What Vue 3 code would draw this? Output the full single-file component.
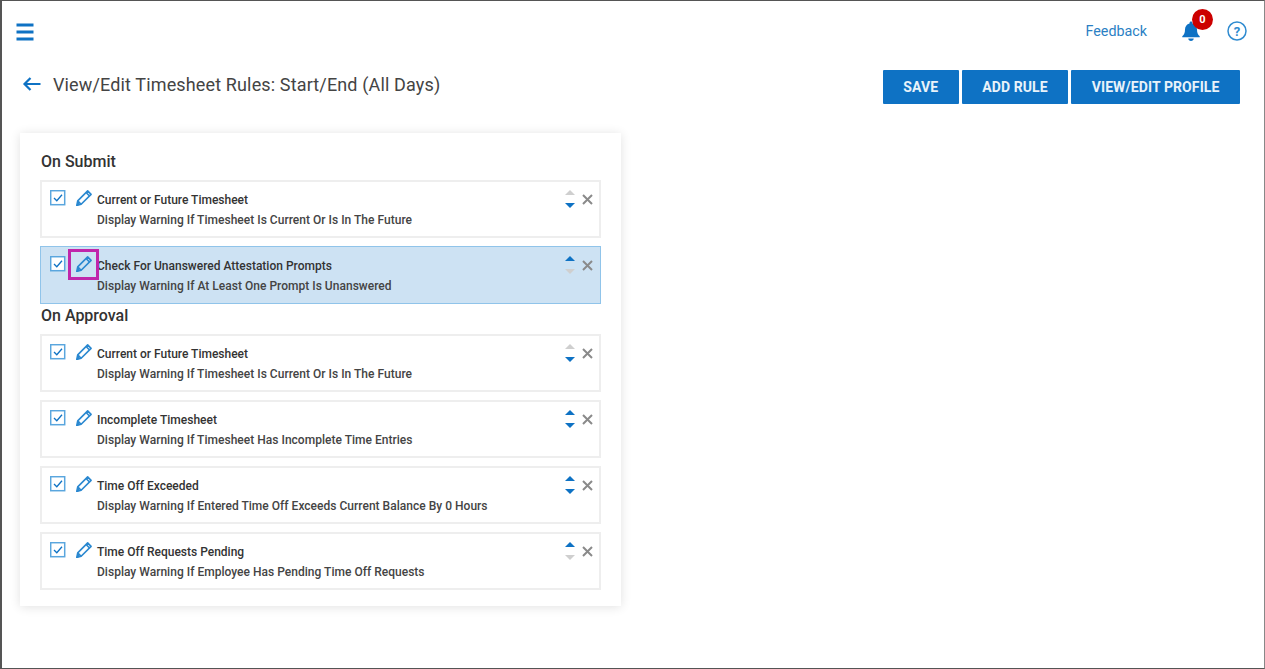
<script setup>
const groups = [
  { title: 'On Submit', rules: [
    { name: 'Current or Future Timesheet', desc: 'Display Warning If Timesheet Is Current Or Is In The Future', up: false, down: true },
    { name: 'Check For Unanswered Attestation Prompts', desc: 'Display Warning If At Least One Prompt Is Unanswered', up: true, down: false, active: true },
  ]},
  { title: 'On Approval', rules: [
    { name: 'Current or Future Timesheet', desc: 'Display Warning If Timesheet Is Current Or Is In The Future', up: false, down: true },
    { name: 'Incomplete Timesheet', desc: 'Display Warning If Timesheet Has Incomplete Time Entries', up: true, down: true },
    { name: 'Time Off Exceeded', desc: 'Display Warning If Entered Time Off Exceeds Current Balance By 0 Hours', up: true, down: true },
    { name: 'Time Off Requests Pending', desc: 'Display Warning If Employee Has Pending Time Off Requests', up: true, down: false },
  ]},
]
</script>

<template>
  <div class="frame">
    <header class="topbar">
      <svg class="menu" width="20" height="18" viewBox="0 0 20 18"><path d="M1.500 2h17M1.500 9h17M1.500 16h17" stroke="#0e72c4" stroke-width="3.200" fill="none"/></svg>
      <div class="top-right">
        <span class="feedback">Feedback</span>
        <span class="bell-wrap">
          <svg width="20" height="22" viewBox="0 0 22 24"><path d="M11 1.500c1 0 1.600.7 1.600 1.600v.6c3.200.8 5 3.400 5 6.600 0 3.800.9 5.600 3 7.400v1.100H1.400v-1.100c2.100-1.800 3-3.600 3-7.400 0-3.200 1.800-5.800 5-6.600v-.6c0-.9.600-1.600 1.600-1.600zM8 20.300h6c0 1.700-1.300 2.700-3 2.700s-3-1-3-2.700z" fill="#0e72c4"/></svg>
          <span class="badge">0</span>
        </span>
        <svg class="help" width="20" height="20" viewBox="0 0 20 20"><circle cx="10" cy="10" r="9" fill="none" stroke="#2f8bd0" stroke-width="1.500"/><text x="10" y="14.500" text-anchor="middle" class="help-mark">?</text></svg>
      </div>
    </header>

    <div class="titlebar">
      <svg class="back" width="20" height="16" viewBox="0 0 20 16"><path d="M18.500 8H2.500M8.500 2L2.500 8l6 6" fill="none" stroke="#0e72c4" stroke-width="2.200"/></svg>
      <h1>View/Edit Timesheet Rules: Start/End (All Days)</h1>
      <div class="actions">
        <button>SAVE</button>
        <button>ADD RULE</button>
        <button>VIEW/EDIT PROFILE</button>
      </div>
    </div>

    <section class="card">
      <div v-for="g in groups" :key="g.title" class="group">
        <h2>{{ g.title }}</h2>
        <div v-for="r in g.rules" :key="r.name" class="rule" :class="{ active: r.active }">
          <span class="check">
            <svg width="16" height="16" viewBox="0 0 16 16"><rect x="0.700" y="0.700" width="14" height="14" fill="#fff" stroke="#5aa6de" stroke-width="1.500"/><path d="M4 8l2.800 2.800L12 4.800" fill="none" stroke="#0e72c4" stroke-width="1.300"/></svg>
          </span>
          <span class="pencil" :class="{ marked: r.active }">
            <svg width="16" height="16" viewBox="1 1 14 14"><path d="M11.200 1.800l3 3L5.500 13.500l-3.800 1 .8-4zM2.500 10.500l3 3M9.800 3.200l3 3" fill="none" stroke="#2a88d0" stroke-width="1.400" stroke-linejoin="round"/><path d="M1.700 14.500l.8-3.200 2.600 2.400z" fill="#2a88d0"/></svg>
          </span>
          <div class="text">
            <div class="name">{{ r.name }}</div>
            <div class="desc">{{ r.desc }}</div>
          </div>
          <div class="arrows">
            <span class="tri up" :class="{ on: r.up }"></span>
            <span class="tri down" :class="{ on: r.down }"></span>
          </div>
          <svg class="close" width="11" height="11" viewBox="0 0 11 11"><path d="M1 1l9 9M10 1l-9 9" stroke="#8a8a8a" stroke-width="2" fill="none"/></svg>
        </div>
      </div>
    </section>
  </div>
</template>

<style>
html, body { margin: 0; background: #fff; }
</style>

<style scoped>
.frame {
  box-sizing: border-box;
  width: 1265px;
  height: 669px;
  border: 1px solid #555;
  border-left-width: 2px;
  border-right-color: #888;
  font-family: Roboto, "Liberation Sans", sans-serif;
  background: #fff;
  overflow: hidden;
}
.topbar {
  display: flex;
  align-items: center;
  justify-content: space-between;
  height: 60px;
  padding: 0 17px 0 13px;
}
.menu { margin-top: 1px; }
.top-right { display: flex; align-items: center; }
.feedback { font-size: 14.300px; color: #2b7fc4; margin-right: 34px; }
.bell-wrap { position: relative; display: flex; margin-right: 26px; }
.badge {
  position: absolute;
  left: 11px;
  top: -11px;
  width: 21px;
  height: 21px;
  border-radius: 50%;
  background: #cc0000;
  color: #fff;
  font-size: 11px;
  font-weight: 700;
  line-height: 21px;
  text-align: center;
}
.help-mark { font: 700 13px Roboto, sans-serif; fill: #2f8bd0; }
.titlebar {
  display: flex;
  align-items: center;
  height: 34px;
  margin-top: 9px;
  padding: 0 24px 0 20px;
}
.back { margin-top: -6px; }
h1 {
  margin: -6px 0 0 11px;
  font-size: 18px;
  font-weight: 400;
  color: #444;
  letter-spacing: 0.140px;
}
.actions { margin-left: auto; display: flex; gap: 3px; }
button {
  height: 34px;
  padding: 0 20.500px;
  border: none;
  border-radius: 1px;
  background: #0e72c4;
  color: #e8f2fa;
  font-family: inherit;
  font-size: 14px;
  font-weight: 700;
  letter-spacing: 0.100px;
}
.card {
  box-sizing: border-box;
  width: 601px;
  height: 473px;
  margin: 29px 0 0 18px;
  padding: 17px 20px;
  background: #fff;
  box-shadow: 0 1px 10px rgba(0, 0, 0, 0.120);
}
h2 {
  margin: 0;
  padding-left: 1px;
  height: 22px;
  line-height: 24px;
  font-size: 16px;
  font-weight: 500;
  color: #333;
}
.rule {
  box-sizing: border-box;
  position: relative;
  display: flex;
  height: 58px;
  margin-top: 8px;
  padding: 8px 0 0 8px;
  border: 2px solid #eeeeee;
}
.rule.active { background: #cde2f3; border: 1px solid #90c4ea; padding: 9px 0 0 9px; }
.check { width: 16px; height: 16px; }
.pencil {
  position: relative;
  width: 16px;
  height: 16px;
  margin-left: 10px;
}
.pencil.marked::after {
  content: "";
  position: absolute;
  left: -8px;
  top: -7px;
  width: 31px;
  height: 31px;
  box-sizing: border-box;
  border: 3px solid #c026ab;
}
.text { margin-left: 5px; font-size: 12px; color: #333; }
.name { font-weight: 500; line-height: 18px; margin-top: 1px; }
.desc { font-weight: 500; line-height: 18px; margin-top: 2px; color: #444; letter-spacing: 0.020px; }
.arrows {
  position: absolute;
  right: 24px;
  top: 8px;
  display: flex;
  flex-direction: column;
  gap: 8px;
}
.rule.active .arrows { right: 25px; top: 9px; }
.tri { width: 0; height: 0; border-left: 5px solid transparent; border-right: 5px solid transparent; }
.tri.up { border-bottom: 5px solid #cfcfcf; }
.tri.down { border-top: 5px solid #cfcfcf; }
.tri.up.on { border-bottom-color: #0e72c4; }
.tri.down.on { border-top-color: #0e72c4; }
.close { position: absolute; right: 6px; top: 12px; }
.rule.active .close { right: 7px; top: 13px; }
</style>
